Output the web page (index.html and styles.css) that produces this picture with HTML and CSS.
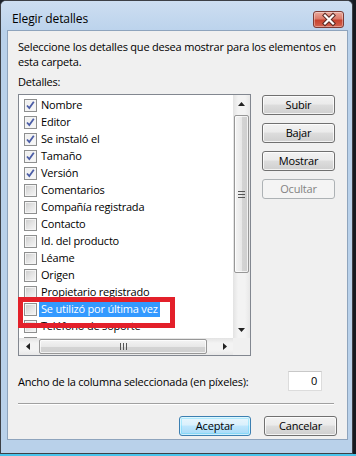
FILE: index.html
```html
<!DOCTYPE html>
<html lang="es">
<head>
<meta charset="utf-8">
<title>Elegir detalles</title>
<link rel="stylesheet" href="styles.css">
</head>
<body>
<div class="screen">
  <div class="top">
    <div class="window">
      <div class="titlebar">
        <span class="title">Elegir detalles</span>
        <span class="close">
          <svg width="30" height="17" viewBox="0 0 30 17">
            <path d="M11 4.5 L19 12.5 M19 4.5 L11 12.5" stroke="#5a2a24" stroke-width="4.2" stroke-linecap="square"/>
            <path d="M11 4.5 L19 12.5 M19 4.5 L11 12.5" stroke="#ffffff" stroke-width="2.2" stroke-linecap="square"/>
          </svg>
        </span>
      </div>
      <div class="client">
        <p class="intro">Seleccione los detalles que desea mostrar para los elementos en<br>esta carpeta.</p>
        <div class="label">Detalles:</div>
        <div class="main">
          <div class="listbox">
            <div class="items">
              <div class="item"><span class="cb on"><svg width="11" height="11" viewBox="0 0 11 11"><path d="M2 5.5 L4.3 8 L8.8 1.8" fill="none" stroke="#4b5da6" stroke-width="1.8"/></svg></span><span class="txt">Nombre</span></div>
              <div class="item"><span class="cb on"><svg width="11" height="11" viewBox="0 0 11 11"><path d="M2 5.5 L4.3 8 L8.8 1.8" fill="none" stroke="#4b5da6" stroke-width="1.8"/></svg></span><span class="txt">Editor</span></div>
              <div class="item"><span class="cb on"><svg width="11" height="11" viewBox="0 0 11 11"><path d="M2 5.5 L4.3 8 L8.8 1.8" fill="none" stroke="#4b5da6" stroke-width="1.8"/></svg></span><span class="txt">Se instaló el</span></div>
              <div class="item"><span class="cb on"><svg width="11" height="11" viewBox="0 0 11 11"><path d="M2 5.5 L4.3 8 L8.8 1.8" fill="none" stroke="#4b5da6" stroke-width="1.8"/></svg></span><span class="txt">Tamaño</span></div>
              <div class="item"><span class="cb on"><svg width="11" height="11" viewBox="0 0 11 11"><path d="M2 5.5 L4.3 8 L8.8 1.8" fill="none" stroke="#4b5da6" stroke-width="1.8"/></svg></span><span class="txt">Versión</span></div>
              <div class="item"><span class="cb"></span><span class="txt">Comentarios</span></div>
              <div class="item"><span class="cb"></span><span class="txt">Compañía registrada</span></div>
              <div class="item"><span class="cb"></span><span class="txt">Contacto</span></div>
              <div class="item"><span class="cb"></span><span class="txt">Id. del producto</span></div>
              <div class="item"><span class="cb"></span><span class="txt">Léame</span></div>
              <div class="item"><span class="cb"></span><span class="txt">Origen</span></div>
              <div class="item"><span class="cb"></span><span class="txt">Propietario registrado</span></div>
              <div class="item"><span class="cb"></span><span class="txt sel">Se utilizó por última vez</span></div>
              <div class="item"><span class="cb"></span><span class="txt">Teléfono de soporte</span></div>
              <div class="item"><span class="cb"></span></div>
            </div>
            <div class="vscroll">
              <span class="sbtn"><svg width="7" height="4" viewBox="0 0 7 4"><path d="M0 4 L3.5 0 L7 4 Z" fill="#222"/></svg></span>
              <span class="vtrack"><span class="vthumb"><span class="grip-v"></span></span></span>
              <span class="sbtn"><svg width="7" height="4" viewBox="0 0 7 4"><path d="M0 0 L3.5 4 L7 0 Z" fill="#222"/></svg></span>
            </div>
            <div class="hscroll">
              <span class="sbtn"><svg width="4" height="7" viewBox="0 0 4 7"><path d="M4 0 L0 3.5 L4 7 Z" fill="#222"/></svg></span>
              <span class="htrack"><span class="hthumb"><span class="grip-h"></span></span></span>
              <span class="sbtn"><svg width="4" height="7" viewBox="0 0 4 7"><path d="M0 0 L4 3.5 L0 7 Z" fill="#222"/></svg></span>
            </div>
            <div class="corner"></div>
            <div class="mark"></div>
          </div>
          <div class="side">
            <span class="btn">Subir</span>
            <span class="btn">Bajar</span>
            <span class="btn">Mostrar</span>
            <span class="btn disabled">Ocultar</span>
          </div>
        </div>
        <div class="width-row">
          <span class="wlabel">Ancho de la columna seleccionada (en píxeles):</span>
          <span class="num">0</span>
        </div>
        <div class="sep"></div>
        <div class="actions">
          <span class="btn default">Aceptar</span>
          <span class="btn">Cancelar</span>
        </div>
      </div>
    </div>
    <div class="desk"></div>
  </div>
  <div class="taskbar"></div>
</div>
</body>
</html>
```
FILE: styles.css
```css
* { box-sizing: border-box; }
html, body { margin: 0; padding: 0; }
body {
  font-family: "Open Sans", "Noto Sans", "Liberation Sans", sans-serif;
  font-size: 11px;
  letter-spacing: -0.2px;
  color: #000;
  background: #1c222b;
}
.screen { width: 356px; height: 456px; display: flex; flex-direction: column; overflow: hidden; }
.top { display: flex; height: 454px; }
.desk { flex: 1; background: #161a20; }
.taskbar { height: 2px; background: #49c4ec; }

.window {
  width: 353px;
  height: 454px;
  border: 1px solid #3d4046;
  border-radius: 6px 6px 0 0;
  background: #b9d1ea;
  display: flex;
  flex-direction: column;
  padding: 0 4px 13px 6px;
}
.titlebar {
  height: 29px;
  margin: 0 -4px 0 -6px;
  padding: 9px 8px 0 11px;
  background: linear-gradient(#cddef1, #bcd3ec);
  border-radius: 5px 5px 0 0;
  display: flex;
  justify-content: space-between;
  align-items: flex-start;
}
.title { font-size: 12px; line-height: 18px; color: #000; letter-spacing: -0.1px; }
.close {
  width: 31px; height: 17px;
  margin-top: 1px;
  border: 1px solid #7d3b35;
  border-radius: 3px;
  background: linear-gradient(#eaa99c 0%, #dc7a6a 45%, #c7432f 55%, #d4634f 100%);
  box-shadow: inset 0 0 0 1px rgba(255,255,255,0.35);
  display: flex; align-items: center; justify-content: center;
}
.close svg { display: block; margin: -1px; }

.client {
  flex: 1;
  background: #f0f0f0;
  border: 1px solid #8ea4bd;
  padding: 8px 10px 0 10px;
  display: flex;
  flex-direction: column;
}
.intro { margin: 0; line-height: 15px; white-space: nowrap; }
.label { margin-top: 5px; line-height: 15px; }
.main { margin-top: 5px; display: flex; align-items: flex-start; }

.listbox {
  position: relative;
  width: 233px;
  height: 262px;
  border: 1px solid #828790;
  background: #fff;
  display: grid;
  grid-template-columns: 1fr 17px;
  grid-template-rows: 1fr 17px;
}
.items { overflow: hidden; padding: 2px 0 0 5px; }
.item { height: 17px; display: flex; align-items: flex-start; white-space: nowrap; }
.cb {
  width: 13px; height: 13px;
  margin-top: 2px;
  margin-right: 2px;
  border: 1px solid #8e8f8f;
  box-shadow: inset 0 0 0 1px #f4f4f4;
  background: linear-gradient(135deg, #cbcbcb 0%, #e4e4e4 50%, #f7f7f7 100%);
  display: flex; align-items: center; justify-content: center;
  flex: none;
}
.cb.on { background: linear-gradient(135deg, #ededed 0%, #f8f8f8 100%); }
.cb svg { display: block; }
.txt { line-height: 16px; height: 16px; padding: 0 2px; }
.txt.sel { background: #3399ff; color: #fff; }

.vscroll {
  grid-column: 2; grid-row: 1;
  display: flex; flex-direction: column;
  background: linear-gradient(90deg, #e3e3e3, #f3f3f3 30%, #f3f3f3 70%, #e8e8e8);
}
.hscroll {
  grid-column: 1; grid-row: 2;
  display: flex;
  background: linear-gradient(#e3e3e3, #f3f3f3 30%, #f3f3f3 70%, #e8e8e8);
}
.corner { grid-column: 2; grid-row: 2; background: #f0f0f0; }
.sbtn { width: 17px; height: 17px; display: flex; align-items: center; justify-content: center; flex: none; }
.sbtn svg { display: block; }
.vtrack { flex: 1; padding: 3px 1px 0 1px; }
.vthumb {
  display: flex; align-items: center; justify-content: center;
  height: 158px;
  border: 1px solid #979797;
  border-radius: 2px;
  background: linear-gradient(90deg, #f4f4f4, #e8e8e8 50%, #d4d4d4 51%, #cfcfcf);
  box-shadow: inset 0 0 0 1px rgba(255,255,255,0.7);
}
.grip-v { width: 7px; height: 7px; background: linear-gradient(#555 0 1px, transparent 1px 3px, #555 3px 4px, transparent 4px 6px, #555 6px 7px); }
.htrack { flex: 1; padding: 1px 9px 1px 3px; }
.hthumb {
  display: flex; align-items: center; justify-content: center;
  height: 15px;
  border: 1px solid #979797;
  border-radius: 2px;
  background: linear-gradient(#f4f4f4, #e8e8e8 50%, #d4d4d4 51%, #cfcfcf);
  box-shadow: inset 0 0 0 1px rgba(255,255,255,0.7);
}
.grip-h { width: 7px; height: 7px; background: linear-gradient(90deg, #555 0 1px, transparent 1px 3px, #555 3px 4px, transparent 4px 6px, #555 6px 7px); }

.mark {
  position: absolute;
  left: -1px; top: 202px;
  width: 157px; height: 31px;
  border: 5px solid #e3202a;
  pointer-events: none;
}

.side { margin-left: 11px; padding-top: 1px; display: flex; flex-direction: column; gap: 8px; }
.btn {
  width: 73px; height: 20px;
  display: flex; align-items: center; justify-content: center;
  border: 1px solid #707070;
  border-radius: 3px;
  background: linear-gradient(#f2f2f2 0%, #ebebeb 45%, #dddddd 50%, #cfcfcf 100%);
  box-shadow: inset 0 0 0 1px rgba(255,255,255,0.75);
  line-height: 16px;
}
.btn.disabled { border-color: #adb2b5; background: #f4f4f4; color: #838383; box-shadow: none; }
.btn.default {
  width: 72px;
  border-color: #3c7fb1;
  background: linear-gradient(#eaf6fd 0%, #d9f0fc 45%, #bee6fd 50%, #a7d9f5 100%);
  box-shadow: inset 0 0 0 1px rgba(255,255,255,0.6), inset 0 0 0 2px rgba(72,216,251,0.35);
}

.width-row { margin-top: 15px; display: flex; align-items: center; justify-content: space-between; height: 20px; }
.num {
  width: 34px; height: 20px;
  margin-right: 15px;
  border: 1px solid #dcdcdc;
  border-top-color: #c8c8c8;
  background: #fff;
  text-align: right;
  padding-right: 4px;
  line-height: 18px;
}
.sep { margin-top: 12px; margin-right: 3px; height: 2px; border-top: 1px solid #a0a0a0; border-bottom: 1px solid #ffffff; }
.actions { margin-top: 11px; display: flex; justify-content: flex-end; gap: 13px; }
```
